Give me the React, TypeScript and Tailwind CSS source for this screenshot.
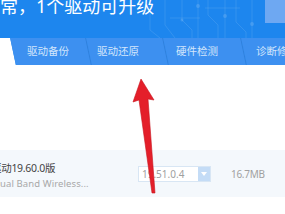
import React from "react";

export default function App() {
  return (
    <div className="relative w-[285px] h-[214px] overflow-hidden bg-white font-['Noto_Sans','Noto_Sans_CJK_SC',sans-serif]">
      {/* header */}
      <div className="relative h-[65px] overflow-hidden bg-[#1d86ee]">
        <svg className="absolute inset-0" width="285" height="65" viewBox="0 0 285 65" fill="none">
          <g stroke="rgba(255,255,255,0.10)" strokeWidth="1">
            <path d="M150 0 V30 L160 38" />
            <path d="M165 0 V25 L175 38" />
            <path d="M182 0 V20 L192 30 V38" />
            <path d="M198 0 V38" />
            <path d="M208 0 V15 L218 25 V38" />
            <path d="M225 0 V38" />
            <path d="M236 0 V22 L246 32 V38" />
            <path d="M252 0 V38" />
            <path d="M205 8 H240" />
            <path d="M170 18 H200" />
          </g>
          <g fill="rgba(255,255,255,0.14)">
            <circle cx="198" cy="6" r="2" />
            <circle cx="225" cy="16" r="2" />
            <circle cx="252" cy="24" r="2" />
            <circle cx="182" cy="20" r="1.5" />
          </g>
        </svg>
        <div className="relative flex h-[38px]">
          <div className="flex-1 text-white text-[18px] leading-[20px] mt-[-4px] whitespace-nowrap">
            常，1个驱动可升级
          </div>
          <div className="w-[20px] h-[23px] bg-[#6ea8f2]" />
        </div>
        <div className="relative flex h-[27px]">
          <div className="w-[40px] ml-[-27px] shrink-0 bg-white skew-x-12" />
          <div className="w-[76px] shrink-0 bg-[#3d90f0] border-r border-[#2f80dc] skew-x-12 flex items-center pl-[14px]">
            <span className="-skew-x-12 text-[10.5px] leading-none text-[#d3e6fc] whitespace-nowrap">驱动备份</span>
          </div>
          <div className="w-[76.5px] shrink-0 bg-[#3d90f0] border-r border-[#2f80dc] skew-x-12 flex items-center pl-[8px]">
            <span className="-skew-x-12 text-[10.5px] leading-none text-[#d3e6fc] whitespace-nowrap">驱动还原</span>
          </div>
          <div className="w-[78px] shrink-0 bg-[#3d90f0] border-r border-[#2f80dc] skew-x-12 flex items-center pl-[9.5px]">
            <span className="-skew-x-12 text-[10.5px] leading-none text-[#d3e6fc] whitespace-nowrap">硬件检测</span>
          </div>
          <div className="w-[80px] shrink-0 bg-[#3d90f0] skew-x-12 flex items-center pl-[11.5px]">
            <span className="-skew-x-12 text-[10.5px] leading-none text-[#d3e6fc] whitespace-nowrap">诊断修复</span>
          </div>
        </div>
      </div>

      {/* content */}
      <div className="h-[85px]" />
      <div className="flex items-center h-[47px] bg-[#f4f8fc]">
        <div className="w-[138px] shrink-0 flex flex-col mt-[4px]">
          <div className="text-[10.5px] leading-[16px] text-[#444] whitespace-nowrap ml-[-9px] tracking-[-0.3px]">
            驱动19.60.0版
          </div>
          <div className="text-[9.5px] leading-[16px] text-[#a8a8a8] whitespace-nowrap ml-[-7px] tracking-[0.1px]">
            Dual Band Wireless...
          </div>
        </div>
        <div className="flex w-[73px] h-[16px] border border-[#d8e6f4] bg-white">
          <div className="flex-1 flex items-center pl-[3px] text-[10px] leading-none text-[#a0a0a0]">19.51.0.4</div>
          <div className="w-[12px] bg-[#c4dcf6] flex items-center justify-center">
            <svg width="6" height="4" viewBox="0 0 6 4">
              <path d="M0 0 H6 L3 4 Z" fill="#ffffff" />
            </svg>
          </div>
        </div>
        <div className="ml-[20px] text-[10px] leading-none text-[#a0a0a0] tracking-[-0.3px]">16.7MB</div>
      </div>
      <div className="pt-[16px] pl-0 text-[12px] leading-[16px] text-[#444] whitespace-nowrap">
        Intel(R) 蓝牙驱动程序
      </div>

      {/* red arrow annotation */}
      <svg className="absolute left-0 top-0" width="285" height="214" viewBox="0 0 285 214">
        <polygon
          points="141,79 154,100 148,99 155,193 152,193 139,100 133,102"
          fill="#e41f2a"
          stroke="#c8141e"
          strokeWidth="0.6"
          strokeLinejoin="round"
        />
      </svg>
    </div>
  );
}
